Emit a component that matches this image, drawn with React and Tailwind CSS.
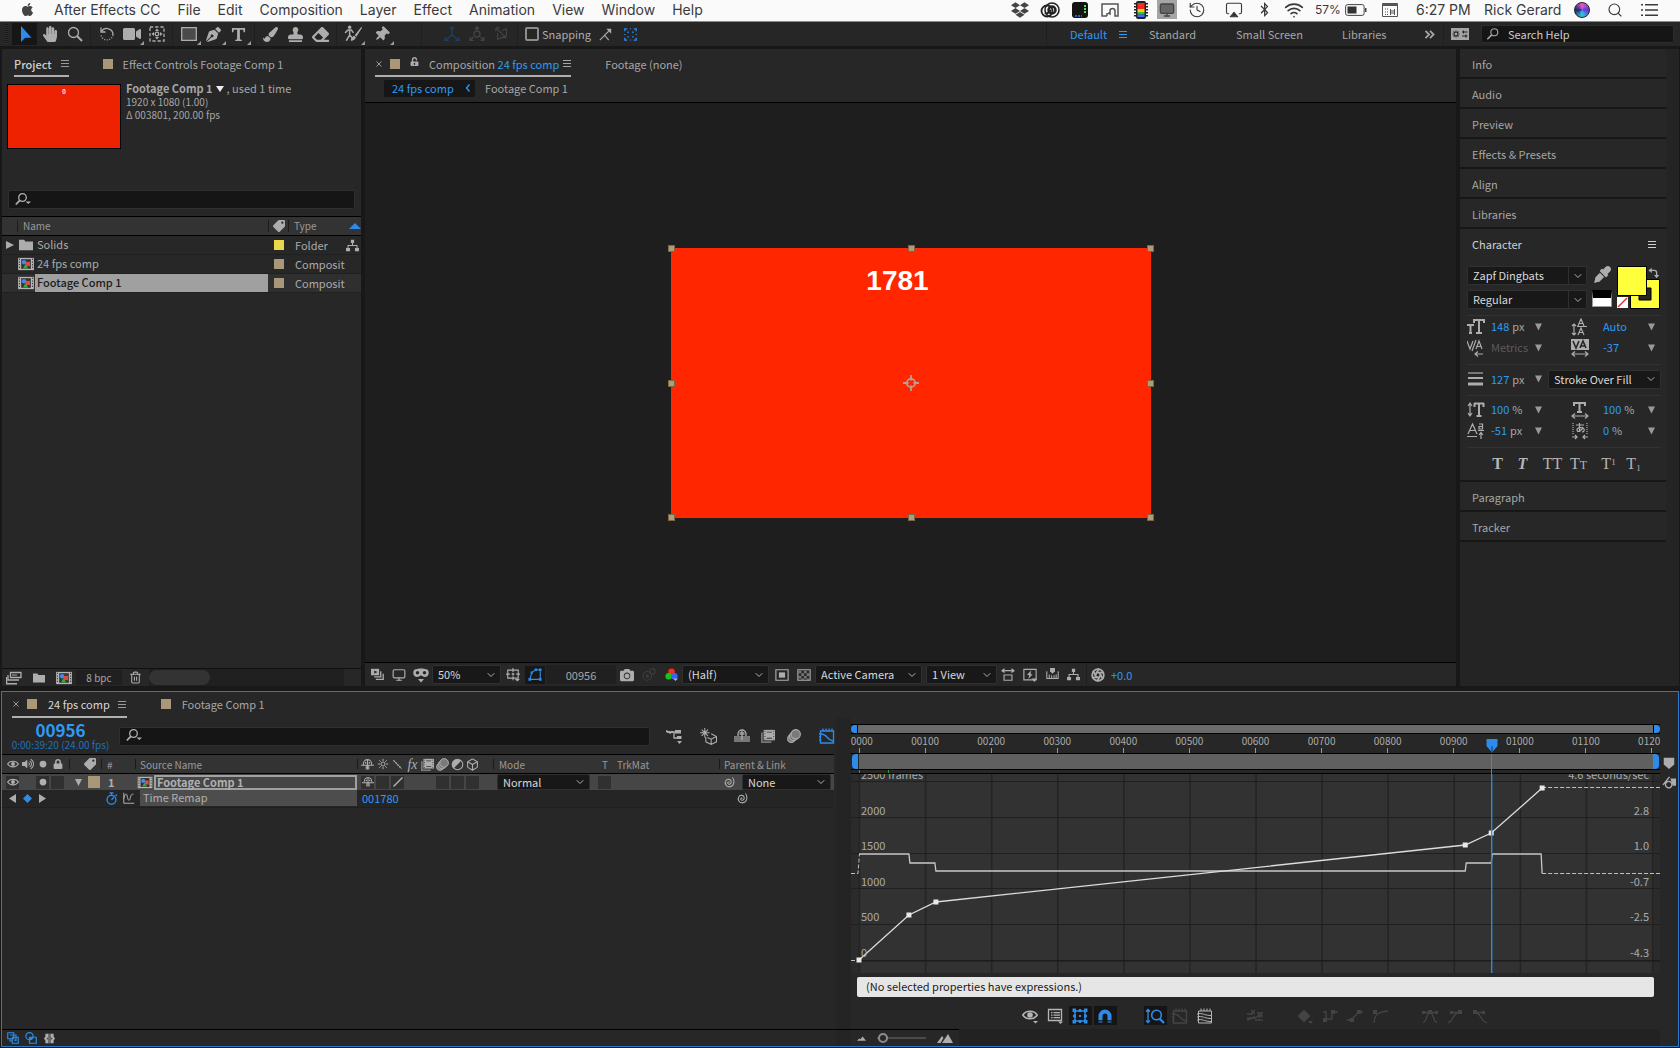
import React, { useState } from "react";
import {
  FaApple, FaDropbox, FaBluetoothB, FaHandPaper, FaStamp, FaEraser, FaPaintBrush, FaTag,
  FaLock, FaUnlockAlt, FaVolumeUp, FaCamera, FaThumbtack, FaPenNib, FaEyeDropper, FaVideo,
} from "react-icons/fa";
import { Wifi, History, Airplay, Search, ChevronDown, Box, Aperture, Monitor, Trash2 } from "lucide-react";

const line = { fill: "none", stroke: "currentColor", strokeWidth: 1.3 };

// 16 x 16 glyphs that the icon packs don't have
const glyphs = {
  arrow: <path d="M4 0v16l4.200-4.200H14.500z" />,
  lens: <g {...line}><circle cx="6.500" cy="6.500" r="5" /><path d="M10 10l5 5" strokeWidth="2" /></g>,
  search: <g {...line}><circle cx="9.500" cy="6" r="4" /><path d="M6.500 9L1.500 14" strokeWidth="1.800" /></g>,
  searchMenu: <g><g {...line}><circle cx="7.500" cy="5.500" r="3.800" /><path d="M4.800 8.300L.8 12.500" strokeWidth="1.700" /></g><path d="M10.500 9.500h5.500l-2.700 2.500z" /></g>,
  rotate: <g {...line}><path d="M2.500 5.500A6.200 6.200 0 0 1 14 9" /><path d="M14 9A6.200 6.200 0 0 1 2 9.500" strokeDasharray="1 1.500" /><path d="M2 1.500v4.500h4.500" /></g>,
  panBehind: <g><path {...line} strokeDasharray="3.200 2" d="M1 1h14v14H1z" /><path d="M8 2.500l2 2.500H6zM8 13.500l2-2.500H6zM2.500 8L5 6v4zM13.500 8L11 6v4z" /><circle cx="8" cy="8" r="1.800" {...line} /></g>,
  rect: <path d="M.7 1.700h14.600v12.600H.7z" fill="#4a4a4a" stroke="currentColor" strokeWidth="1.300" />,
  type: <path d="M1 1h14v4.500h-1.500L13 3H9.500v10l2 .8V15h-7v-1.200l2-.8V3H3l-.5 2.500H1z" />,
  roto: <g><circle cx="5" cy="2" r="1.500" /><path {...line} d="M1 7l2.500-2.500H6.500L8.500 7M5 5v4l-3 5M5 9l2 2v3" /><path d="M15.500 1.500L9.500 9l1.500 1.500 5-8zM9 9.500c-2 .5-1.500 3-3.500 4 2.500.5 5-.5 5-2.700z" /></g>,
  axis: <g {...line}><path d="M8 1v8M8 9l-6.500 5M8 9l6.500 5M6 3l2-2.300L10 3M1.200 11v3.300h3.300M14.800 11v3.300h-3.300" /></g>,
  axisWorld: <g {...line}><path d="M8 1v3M4.500 11L2 13.500M11.500 11l2.500 2.500M6 3l2-2.300L10 3M1.200 11v3.300h3.300M14.800 11v3.300h-3.300" /><circle cx="8" cy="8" r="3" /></g>,
  axisView: <g {...line}><path d="M2 2l11 11M3 7v7l10-4V2L8 4M1 1h4M1 1v4" /></g>,
  snapEdge: <g><path {...line} d="M1 15l6-6 5 6M6.500 9L12 4" /><path d="M9 1h6v6z" /></g>,
  snapBox: <g {...line} strokeWidth="1.600"><path d="M1 4V1h3M12 1h3v3M15 12v3h-3M4 15H1v-3M5 6V5h1M10 5h1v1M11 10v1h-1M6 11H5v-1M7.500 1h1M7.500 15h1M1 7.500v1M15 7.500v1" /></g>,
  workspace: <g><path d="M-1 2h18v12H-1z" /><path d="M4 4.500v7M.5 8h7M1.500 5.500l5 5M6.500 5.500l-5 5M10 6h5.500M10 10h5.500M11.500 4.500v3M14 8.500v3" stroke="#262626" strokeWidth="1.200" /><circle cx="4" cy="8" r="1.300" /></g>,
  swap: <g><path {...line} strokeWidth="1.800" d="M4 4.500h4.500a3 3 0 0 1 3 3V11" /><path d="M5 1v7L.5 4.500zM8 10.500h7L11.500 15z" /></g>,
  comp: <g><path fill="#b5b5b5" d="M-1 1h18v14H-1z" /><path fill="#2b2b2b" d="M0 2h1v1.500H0zM0 5h1v1.500H0zM0 8h1v1.500H0zM0 11h1v1.500H0zM15 2h1v1.500h-1zM15 5h1v1.500h-1zM15 8h1v1.500h-1zM15 11h1v1.500h-1z" /><path fill="#333" d="M2.500 2.500h11v11h-11z" /><circle cx="5.800" cy="6" r="2.500" fill="#3b8df0" /><path fill="#e04a3c" d="M8 5.500h4.500v5H8z" /><path fill="#2eae3a" d="M7.500 8l3 5h-6z" /></g>,
  folder: <path d="M0 2h6l1.200 2H16v10H0z" />,
  footage: <g><path {...line} d="M4.500 2.500H15v5H4.500zM2 5v5h11" /><path d="M0 7h1.300v6H11v1.500H0zM6 4.500h5v1H6z" /></g>,
  tree: <g><path d="M6 1h4v4H6zM0 11h5v4H0zM11 11h5v4h-5z" /><path {...line} d="M8 5v3M2.500 11V8h11v3" /></g>,
  layers: <g><path d="M0 1h10v8H0z" /><path d="M4 3l4 2-4 2z" fill="#272727" /><path {...line} strokeWidth="1.600" d="M12 4v7H4M15 7v7H6" /></g>,
  goggles: <g><path d="M1 3c4-2 10-2 14 0 1.500 3 .5 7-3 7-2 0-3-1.500-4-1.500S6 10 4 10C.5 10-.5 6 1 3zM5 12h6l-3 3.500z" /><circle cx="4.500" cy="5.800" r="1.700" fill="#272727" /><circle cx="11.500" cy="5.800" r="1.700" fill="#272727" /></g>,
  gridOpt: <g><path {...line} d="M2 2.500h12v9H2zM8 0v4.500M8 9.500V14M0 7h4.500M11.500 7H16M6.500 7h3M8 5.500v3" /><path d="M10 12.500h6l-3 3z" /></g>,
  mask: <g><path {...line} d="M2 13L4.500 5 9 2h5v11z" /><path d="M.5 11.500h3v3h-3zM12.500 11.500h3v3h-3zM12.500.5h3v3h-3zM7.500.5h3v3h-3zM3 4h2.500v2.500H3z" /></g>,
  snapshot: <g><circle cx="6" cy="9" r="5" {...line} /><circle cx="6" cy="9" r="2" /><circle cx="12" cy="4" r="3" {...line} /></g>,
  rgb: <g><circle cx="8" cy="4.500" r="4" fill="#ff2a12" /><circle cx="4.500" cy="10" r="4" fill="#19c219" /><circle cx="11.500" cy="10" r="4" fill="#3763ff" /><path d="M10 13h6l-3 3z" /></g>,
  roi: <g><path {...line} d="M1 2h14v12H1z" /><path d="M4.500 5h7v6h-7z" /></g>,
  checker: <g><path {...line} d="M1 2h14v12H1z" /><path opacity=".6" d="M2 3h3v3H2zM8 3h3v3H8zM5 6h3v3H5zM11 6h3v3h-3zM2 9h3v3H2zM8 9h3v3H8zM5 12h3v1.500H5zM11 12h3v1.500h-3z" /></g>,
  aspect: <g><path {...line} d="M3.500 8h9v6h-9zM2 3h12" /><path d="M0 3l4-3v6zM16 3l-4-3v6z" /></g>,
  fast: <g><path {...line} d="M1 1.500h14v12H1z" /><path d="M9.500 2.500L4.500 8h2.700L6 12.500 11 7H8.500z" /><path d="M9.500 12h6.500l-3 4z" /></g>,
  ruler: <g><path {...line} d="M1 4v9h14V4M4 8v5M7 9v4M10 9v4M12.500 8v5" /><path d="M5 0h6v4L8 7 5 4z" /></g>,
  shy: <g><path {...line} d="M3 9V7a5 5 0 0 1 10 0v2M0 9h16M8 2v12M6.500 9v5M9.500 9v5" /><path d="M5 5h1.500v2H5zM9.500 5H11v2H9.500z" /></g>,
  shyAll: <g><path {...line} d="M4 8V6a4 4 0 0 1 8 0v2M8 3v9" /><path d="M5.500 4h5v3h-5z" opacity=".7" /><path opacity=".6" d="M0 8h16v6H0z" /></g>,
  sun: <g {...line}><circle cx="8" cy="8" r="2.700" /><path d="M8 1v3M8 12v3M1 8h3M12 8h3M3 3l2 2M11 11l2 2M13 3l-2 2M5 11l-2 2" /></g>,
  quality: <path {...line} strokeWidth="2" strokeDasharray="3 1" d="M2 2l12 12" />,
  slash: <path {...line} strokeWidth="1.800" d="M2 14L14 2" />,
  film: <g><path opacity=".6" d="M0 4h2v10h10v2H0z" /><path d="M3 1h13v12H3z" /><path fill="#333" d="M6.500 3h6v1h-6zM6.500 10h6v1h-6zM4 2h1v1H4zM4 5h1v1H4zM4 8h1v1H4zM4 11h1v1H4zM14 2h1v1h-1zM14 5h1v1h-1zM14 8h1v1h-1zM14 11h1v1h-1z" /></g>,
  blur: <g fill="#7a7a7a" stroke="currentColor" strokeWidth="1.200"><circle cx="5" cy="11" r="4.300" /><circle cx="7.500" cy="8.500" r="4.800" /><circle cx="10" cy="6" r="5.300" /></g>,
  adjust: <g><circle cx="8" cy="8" r="6.500" {...line} /><path d="M12.600 3.400A6.500 6.500 0 1 0 3.400 12.600z" /></g>,
  eye: <g><path {...line} strokeWidth="1.500" d="M.8 8C4 3 12 3 15.200 8 12 13 4 13 .8 8z" /><circle cx="8" cy="8" r="2.600" /></g>,
  eyeMenu: <g><path {...line} strokeWidth="1.500" d="M.8 7C4 2 12 2 15.200 7 12 12 4 12 .8 7z" /><circle cx="8" cy="7" r="2.800" /><path d="M11 13h5l-2.500 2.500z" /></g>,
  dot: <circle cx="8" cy="8" r="4.500" />,
  spiral: <path {...line} strokeWidth="1.400" d="M8.500 8.500c-1-1.500-3 0-2 1.500 1.500 2 5 .5 4.500-2.500C10.500 4 6 3.500 4 6c-2.500 3.500 0 8.500 4.500 8.500 4.500-.5 6.500-4 6-8-.2-2-1-3.500-2-4.500" />,
  stopwatch: <g {...line} strokeWidth="1.600"><circle cx="8" cy="9.500" r="5.500" /><path d="M8 9.500l3-3M5.500 1h5M8 1v3M13 3l1.800 1.800" /></g>,
  graphToggle: <path {...line} d="M1 1v14h14M1 9c2-8 4-8 5-2s3 5 4 0 3-4 4-4" />,
  flow: <g><path d="M0 2l5 2v2L0 4zM5 3h2v2H5zM9 2h6v3.500H9zM11 8h4.500v3H11zM11 13h5l-2.500 3z" /><path {...line} d="M1 4h8M8 4v6h4" /></g>,
  draft: <g><path {...line} strokeWidth="1" d="M4.500 0v9M0 4.500h9M1.500 1.500l6 6M7.500 1.500l-6 6M10.500 5.500l5 2.500v5l-5 2.500-5-2.500V8.500M10.500 15.500v-5M15.500 8l-5 2.500L7 9" /></g>,
  graph: <g><path {...line} d="M1.500 3h13v12h-13zM4 .5V3M7 .5V3M10 .5V3M13 .5V3M0 6h1.500M0 9h1.500M0 12h1.500" /><path {...line} d="M2 6c7 0 5 6 12 7" /></g>,
  graphRef: <g><path {...line} strokeWidth="1" d="M1.500 3h13v12h-13zM4 .5V3M7 .5V3M10 .5V3M13 .5V3M0 6h1.500M0 9h1.500M0 12h1.500M2 5.500c5 0 6 2 12 2M2 8.500c5 0 6 2 12 2M2 11.500c5 0 6 2 12 2" /></g>,
  list: <g><path {...line} d="M1.500 1.500h13v11h-13z" /><path d="M4 4h1.500v1.300H4zM6.500 4H13v1.300H6.500zM4 6.500h1.500v1.300H4zM6.500 6.500H13v1.300H6.500zM4 9h1.500v1.300H4zM6.500 9H13v1.300H6.500zM11 13.500h5l-2.500 2.500z" /></g>,
  transform: <g><path {...line} strokeWidth="1.600" d="M3 3h10v10H3z" /><path d="M.5.5h3.500V4H.5zM12 .5h3.500V4H12zM.5 12h3.500v3.500H.5zM12 12h3.500v3.500H12zM6.700 1h2.600v3H6.700zM6.700 12h2.600v3H6.700zM1 6.700h3v2.600H1zM12 6.700h3v2.600h-3zM7 7h2v2H7z" /></g>,
  magnet: <g><path d="M1.500 8a6.500 6.500 0 0 1 13 0v4H10.500V8a2.500 2.500 0 0 0-5 0v4h-4z" /><path opacity=".5" d="M1.500 12.500h4V15h-4zM10.500 12.500h4V15h-4z" /></g>,
  fitZoom: <g><path {...line} d="M1 2v12M-1 3.500l2-2 2 2M-1 12.500l2 2 2-2" /><circle cx="9.500" cy="7" r="4.800" {...line} strokeWidth="1.600" /><path d="M12.500 10.500l4.500 4.500" stroke="currentColor" strokeWidth="2.200" /></g>,
  separate: <path {...line} d="M0 6h6M0 10h8l3-2h5M8 12h8M10 5h6M0 12c4 0 5-3 8-3M4 2l4 4M8 2L4 6M11 6l2 2M15 5l-3 5" />,
  diamond: <path d="M7 1.500l6.500 6.500L7 14.500.5 8zM11 13h5l-2.500 3z" />,
  hold: <g><path d="M1 10h4v4H1zM9 2h4v4H9z" /><path {...line} d="M1 4h3v7h6V5M12 4h4" /></g>,
  linear: <g><path d="M3 10h4v4H3zM10 2h4v4h-4z" /><path {...line} d="M0 12h4L12 4h4" /></g>,
  autoBez: <g><path d="M1 2h4v4H1z" /><path {...line} d="M2 15c0-8 4-11 14-12" /></g>,
  easy: <g><path d="M6 2h4v4H6zM0 3h3v3H0zM13 3h3v3h-3z" /><path {...line} d="M1 4.500h14M1 14.500c4 0 3-10 7-10s3 10 7 10" /></g>,
  easyIn: <g><path d="M11 2h4v4h-4zM3 3h3v3H3z" /><path {...line} d="M5 4.500h8M1 14.500c5 0 5-10 11-10" /></g>,
  easyOut: <g><path d="M1 2h4v4H1zM10 3h3v3h-3z" /><path {...line} d="M4 4.500h8M3 4.500c6 0 6 10 12 10" /></g>,
  shield: <path d="M1 1h14v9l-7 6-7-6z" />,
  keyIn: <g><path {...line} strokeWidth="1.700" d="M0 11L8 1M3 11a4 4 0 1 1 3 3.500M3 11a4 4 0 0 0 3 3.500" /><path d="M9 3h7v9h-4z" /></g>,
  hillSmall: <path d="M0 12l4-4 2 1.500 4-5L16 12z" />,
  hillBig: <path d="M0 13l5-7 1.500 2L3.500 13zM5 13l6-9 5 9z" />,
  switches: <g><path {...line} strokeWidth="1.500" d="M1 1h8v8H1zM4 4h8v8M4 9v3h4" /><path {...line} strokeWidth="1.500" d="M7 7h8v8H7z" /><path d="M10 10h2v2h-2z" /></g>,
  modes: <g><circle cx="6" cy="5.500" r="4.800" {...line} strokeWidth="1.600" /><path {...line} strokeWidth="1.600" d="M6 7h9v8H6z" /><path d="M6 7h5c0 3-2 4-5 3.500z" /></g>,
  inOut: <g><path opacity=".5" d="M5 1h6v14H5z" /><path d="M2 1h4v5L3.500 8 6 10v5H2v-4L0 8l2-3zM14 1h-4v5l2.500 2L10 10v5h4v-4l2-3-2-3z" /></g>,
  menuList: <g><path d="M4 2h13v1.600H4zM4 7.200h13v1.600H4zM4 12.400h13V14H4zM0 2h2v1.600H0zM0 7.200h2v1.600H0zM0 12.400h2V14H0z" /></g>,
};

const Icon = ({ name, className = "size-4" }) => (
  <svg viewBox="0 0 16 16" className={`${className} shrink-0 overflow-visible`} fill="currentColor" aria-hidden="true">
    {glyphs[name]}
  </svg>
);

const IconButton = ({ label, className = "w-[22px] h-5", children }) => (
  <button type="button" aria-label={label} className={`flex items-center justify-center shrink-0 ${className}`}>
    {children}
  </button>
);

const Burger = ({ className = "" }) => (
  <span className={`flex flex-col gap-[2px] w-2 shrink-0 ${className}`}>
    <i className="h-px bg-current" />
    <i className="h-px bg-current" />
    <i className="h-px bg-current" />
  </span>
);

const Swatch = ({ className = "bg-[#a89878]" }) => <span className={`size-[10px] shrink-0 ${className}`} />;

const Close = () => (
  <svg viewBox="0 0 6 6" className="size-[6px] ml-px mr-2 shrink-0" fill="none" stroke="#9a9a9a" aria-hidden="true"><path d="M.5.500l5 5M5.500.500l-5 5" /></svg>
);

const Dropdown = ({ label, value, split, className = "" }) => (
  <span className={`relative flex shrink-0 bg-[#181818] border border-[#303030] rounded-[2px] ${className}`}>
    <select aria-label={label} className="w-full h-full appearance-none bg-transparent pl-[5px] pr-4 text-[#d8d8d8] outline-none leading-[15px]">
      <option>{value}</option>
    </select>
    <span className={`absolute right-0 inset-y-0 w-[18px] flex items-center justify-center pointer-events-none ${split ? "border-l border-[#303030]" : ""}`}>
      <ChevronDown className="size-3 text-[#b0b0b0]" />
    </span>
  </span>
);

const menus = ["File", "Edit", "Composition", "Layer", "Effect", "Animation", "View", "Window", "Help"];

const MenuBar = () => (
  <header className="h-[22px] shrink-0 bg-[#fafafa] border-b border-[#8a8a8a] flex items-center justify-between pb-[2px] text-[#3a3a3a] text-[14px] leading-[18px] font-[Inter,sans-serif] overflow-hidden">
    <nav className="flex items-center gap-[17px] pl-5 whitespace-nowrap">
      <FaApple className="size-[15px] mr-[2px] text-[#444]" />
      <button type="button">After Effects CC</button>
      {menus.map((m) => <button type="button" key={m}>{m}</button>)}
    </nav>
    <div className="flex items-center pr-[22px] whitespace-nowrap">
      <span className="w-[30px] flex justify-center"><FaDropbox className="size-[18px] text-[#444]" /></span>
      <span className="w-[30px] flex justify-center">
        <svg viewBox="0 0 20 16" className="w-5 h-4" fill="none" stroke="#222" aria-hidden="true">
          <circle cx="7" cy="9" r="5.500" strokeWidth="1.800" /><circle cx="12" cy="8" r="7" strokeWidth="1.600" />
          <circle cx="12" cy="8" r="3.500" strokeWidth="2.500" /><path d="M5 11c3 2 4-1 6-3" strokeWidth="2" />
        </svg>
      </span>
      <span className="w-[30px] flex justify-center">
        <svg viewBox="0 0 16 16" className="size-4" aria-hidden="true">
          <rect width="16" height="16" rx="3" fill="#141414" /><path d="M13 3v9" stroke="#4fe34f" strokeWidth="2" strokeDasharray="2 1" /><path d="M3 14h7" stroke="#3a7bff" strokeWidth="1.500" strokeDasharray="2 1" />
        </svg>
      </span>
      <span className="w-[30px] flex justify-center">
        <svg viewBox="0 0 18 14" className="w-[18px] h-[14px]" fill="none" stroke="#555" strokeWidth="1.500" aria-hidden="true">
          <path d="M6 13H1V1h16v12h-3V8a2.500 2.500 0 0 0-5 0v3l-2-1M6 13v-3" />
        </svg>
      </span>
      <span className="w-[32px] flex justify-center">
        <svg viewBox="0 0 14 18" className="w-[14px] h-[18px]" aria-hidden="true">
          <path d="M1 2v15M13 2v15" stroke="#222" strokeWidth="2" strokeDasharray="1.500 1.500" /><rect x="2" width="10" height="18" rx="2" fill="#222" />
          <path fill="#ff2a1a" d="M3.500 2h7v6h-7z" /><path fill="#ffd21c" d="M3.500 8h7v3h-7z" /><path fill="#35c52b" d="M3.500 11h7v2.500h-7z" /><path fill="#3a6cff" d="M3.500 13.500h7V16h-7z" />
        </svg>
      </span>
      <span className="w-[20px] h-[19px] flex items-center justify-center bg-[#a5a5a5]"><Monitor className="size-4 text-[#444] fill-[#666]" /></span>
      <span className="w-[40px] flex justify-center"><History className="size-[18px]" strokeWidth={1.5} /></span>
      <span className="w-[34px] flex justify-center"><Airplay className="size-[18px] [&_path:last-child]:fill-[#333]" strokeWidth={1.5} /></span>
      <span className="w-[26px] flex justify-center"><FaBluetoothB className="size-[15px]" /></span>
      <span className="w-[34px] flex justify-center"><Wifi className="size-[20px]" strokeWidth={2} /></span>
      <span className="w-[30px] pl-1 text-[12px]">57%</span>
      <svg viewBox="0 0 22 12" className="w-[22px] h-3 ml-1" aria-hidden="true">
        <rect x=".6" y=".6" width="18.500" height="10.800" rx="2" fill="none" stroke="#444" /><path fill="#333" d="M2.500 2.500h9v7h-9z" /><path fill="#444" d="M20 4h1.500v4H20z" />
      </svg>
      <span className="w-[46px] flex justify-center">
        <svg viewBox="0 0 16 14" className="w-4 h-[14px]" fill="none" stroke="#555" aria-hidden="true">
          <path d="M.5.500h15v13H.5z" /><path d="M.5 2h15" strokeWidth="2" /><path d="M3 6h3M3 9h3M3 11.500h3" strokeDasharray="1 1" /><path d="M8.500 8h4v2h-4zM8.500 6v6M12.500 6v6" />
        </svg>
      </span>
      <span className="w-[71px] pl-[3px]">6:27 PM</span>
      <span className="w-[90px]">Rick Gerard</span>
      <span className="size-4 rounded-full bg-[conic-gradient(#e65ad0,#5a3ad0,#37c8e8,#1b2a6b,#e65ad0)] border border-[#222]" />
      <span className="w-[50px] flex justify-center"><Search className="size-4" strokeWidth={1.7} /></span>
      <Icon name="menuList" className="w-[18px] h-4" />
    </div>
  </header>
);

const Divider = () => <span className="w-[7px] h-6 shrink-0 flex justify-center"><i className="w-px h-full bg-[#1f1f1f]" /></span>;

const Tool = ({ label, active, more, children }) => (
  <button type="button" aria-label={label} className={`relative w-[25px] h-[22px] shrink-0 flex items-center justify-center ${active ? "bg-[#161616] text-[#2d8ceb]" : ""}`}>
    {children}
    {more && <svg viewBox="0 0 4 4" className="absolute right-0 bottom-0 size-1" fill="#9a9a9a" aria-hidden="true"><path d="M4 0v4H0z" /></svg>}
  </button>
);

const Toolbar = () => {
  const [snap, setSnap] = useState(false);
  return (
    <div className="h-6 shrink-0 bg-[#262626] flex items-center text-[#adadad] overflow-hidden">
      <span className="w-3 flex justify-center"><i className="w-[3px] h-5 bg-[repeating-linear-gradient(#161616_0_1px,#303030_1px_2px)]" /></span>
      <Tool label="Selection" active><Icon name="arrow" /></Tool>
      <Tool label="Hand"><FaHandPaper className="size-4" /></Tool>
      <Tool label="Zoom"><Icon name="lens" /></Tool>
      <Divider />
      <Tool label="Rotation"><Icon name="rotate" /></Tool>
      <Tool label="Camera" more><FaVideo className="size-[18px]" /></Tool>
      <Tool label="Pan Behind"><Icon name="panBehind" /></Tool>
      <Divider />
      <Tool label="Rectangle" more><Icon name="rect" /></Tool>
      <Tool label="Pen" more><FaPenNib className="size-[15px]" /></Tool>
      <Tool label="Type" more><Icon name="type" className="size-[15px]" /></Tool>
      <Divider />
      <Tool label="Brush"><FaPaintBrush className="size-[15px]" /></Tool>
      <Tool label="Clone Stamp"><FaStamp className="size-[15px]" /></Tool>
      <Tool label="Eraser"><FaEraser className="size-[17px]" /></Tool>
      <Divider />
      <Tool label="Roto Brush" more><Icon name="roto" className="size-[18px]" /></Tool>
      <span className="w-1" />
      <Tool label="Puppet Pin" more><FaThumbtack className="size-[15px] rotate-45" /></Tool>
      <span className="w-6" />
      <Divider />
      <span className="w-[14px]" />
      <span className="flex text-[#1d3f66]"><Tool label="Local Axis"><Icon name="axis" /></Tool></span>
      <span className="flex text-[#444]">
        <Tool label="World Axis"><Icon name="axisWorld" /></Tool>
        <Tool label="View Axis"><Icon name="axisView" className="size-[14px]" /></Tool>
      </span>
      <Divider />
      <label className="flex items-center gap-[3px] pl-1 leading-[16px]">
        <input type="checkbox" checked={snap} onChange={(e) => setSnap(e.target.checked)} className="size-[14px] appearance-none border-2 border-[#8c8c8c] rounded-[2px] checked:bg-[#2d8ceb]" />
        Snapping
      </label>
      <span className="w-[2px]" />
      <Tool label="Snap to edges"><Icon name="snapEdge" className="size-[13px]" /></Tool>
      <span className="flex text-[#2d8ceb]"><Tool label="Snap to features"><Icon name="snapBox" className="size-[13px]" /></Tool></span>
      <div className="ml-auto flex items-center h-full text-[#a6a6a6] leading-[16px] whitespace-nowrap">
        <Divider />
        <button type="button" className="flex items-center gap-3 pl-[20px] w-[99px] text-[#2d9bf5]">Default <Burger /></button>
        <button type="button" className="w-[87px] text-left">Standard</button>
        <button type="button" className="w-[106px] text-left">Small Screen</button>
        <button type="button" className="w-[82px] text-left">Libraries</button>
        <button type="button" aria-label="More workspaces" className="w-4">
          <svg viewBox="0 0 12 10" className="w-3 h-[9px]" {...line} strokeWidth="2" aria-hidden="true"><path d="M1 1l4 4-4 4M6 1l4 4-4 4" /></svg>
        </button>
        <Divider />
        <button type="button" aria-label="Workspace settings" className="w-[34px] pl-[5px]"><Icon name="workspace" className="w-4 h-4" /></button>
        <label className="flex items-center w-[193px] h-[18px] mr-[6px] bg-[#151515] border border-[#2c2c2c] rounded-[2px]">
          <Icon name="search" className="size-[14px] ml-1" />
          <input aria-label="Search Help" placeholder="Search Help" className="w-full bg-transparent pl-2 outline-none placeholder:text-[#cccccc]" />
        </label>
      </div>
    </div>
  );
};

const projectItems = [
  { name: "Solids", type: "Folder", icon: "folder", color: "bg-[#e8d84a]", folder: true },
  { name: "24 fps comp", type: "Composit", icon: "comp", color: "bg-[#a89878]" },
  { name: "Footage Comp 1", type: "Composit", icon: "comp", color: "bg-[#a89878]", selected: true },
];

const ProjectPanel = () => (
  <section className="w-[359px] ml-[2px] shrink-0 bg-[#272727] flex flex-col overflow-hidden">
    <div className="h-7 shrink-0 flex items-stretch text-[#a6a6a6] leading-[16px]">
      <button type="button" className="ml-3 pt-[3px] flex items-center gap-[9px] border-b-2 border-[#b0b0b0] text-[#d0d0d0] font-medium">
        Project <Burger className="text-[#9a9a9a]" />
      </button>
      <button type="button" className="ml-[34px] pt-px flex items-center gap-[10px]"><Swatch />Effect Controls Footage Comp 1</button>
    </div>
    <div className="flex pt-[5px] pl-[5px] gap-[5px] h-[113px] shrink-0">
      <div className="w-[114px] h-[65px] mt-[2px] bg-[#ee2200] border border-black text-white text-[6px] leading-[14px] text-center font-bold">0</div>
      <div className="leading-[13px] text-[10px] text-[#a6a6a6]">
        <p className="flex items-center text-[11px]">
          <b className="font-bold">Footage Comp 1</b>
          <svg viewBox="0 0 8 6" className="w-2 h-[6px] mx-[3px]" fill="#eee" aria-hidden="true"><path d="M0 0h8L4 6z" /></svg>, used 1 time
        </p>
        <p>1920 x 1080 (1.00)</p>
        <p>Δ 003801, 200.00 fps</p>
      </div>
    </div>
    <label className="mx-[6px] h-[19px] shrink-0 flex items-center bg-[#151515] border border-[#2f2f2f] rounded-[2px] text-[#b0b0b0]">
      <Icon name="searchMenu" className="size-4 ml-[6px]" />
      <input aria-label="Search project" className="w-full bg-transparent outline-none pl-2" />
    </label>
    <table className="w-full table-fixed mt-[7px] shrink-0 text-left leading-[17px] text-[#aaaaaa] border-collapse">
      <colgroup><col /><col className="w-[21px]" /><col className="w-[72px]" /></colgroup>
      <thead>
        <tr className="h-[19px] bg-[#333] border-y border-black text-[10px] text-[#999]">
          <th className="font-normal p-0"><span className="block ml-[15px] pl-[5px] border-l border-[#1c1c1c] h-3 leading-[12px]">Name</span></th>
          <th className="p-0"><span className="flex justify-center border-x border-[#1c1c1c] h-3"><FaTag className="size-3 -scale-x-100 text-[#adadad]" /></span></th>
          <th className="font-normal p-0"><span className="flex items-center justify-between pl-[5px] leading-[12px]">Type
            <svg viewBox="0 0 12 6" className="w-3 h-[6px]" fill="#2d8ceb" aria-hidden="true"><path d="M0 6l6-6 6 6z" /></svg></span></th>
        </tr>
      </thead>
      <tbody>
        {projectItems.map((item) => (
          <tr key={item.name} className={`h-[19px] border-b border-[#202020] ${item.selected ? "bg-[#2f2f2f]" : ""}`}>
            <td className="p-0">
              <div className="flex items-center h-[18px]">
                <span className="w-4 flex justify-center">
                  {item.folder && <svg viewBox="0 0 8 8" className="size-[8px]" fill="#adadad" aria-hidden="true"><path d="M0 0l8 4-8 4z" /></svg>}
                </span>
                <Icon name={item.icon} className="w-4 h-[14px] text-[#adadad]" />
                <span className={`flex-1 ml-px pl-[2px] h-full ${item.selected ? "bg-[#a0a0a0] text-[#1c1c1c] font-medium" : ""}`}>{item.name}</span>
              </div>
            </td>
            <td className="p-0"><span className="flex justify-center"><Swatch className={item.color} /></span></td>
            <td className="p-0">
              <div className="flex items-center justify-between pl-[6px] pr-[2px]">
                <span>{item.type}</span>
                {item.folder && <Icon name="tree" className="size-[13px] text-[#adadad]" />}
              </div>
            </td>
          </tr>
        ))}
      </tbody>
    </table>
    <div className="mt-auto h-[18px] shrink-0 border-t border-[#101010] flex items-center pl-px text-[#adadad]">
      <IconButton label="Interpret Footage"><Icon name="footage" /></IconButton>
      <IconButton label="New Folder" className="w-7 h-4"><Icon name="folder" className="w-[14px] h-3" /></IconButton>
      <IconButton label="New Composition"><Icon name="comp" className="w-4 h-[14px]" /></IconButton>
      <button type="button" className="w-[46px] ml-px h-[15px] bg-[#202020] text-[10px] leading-[15px] text-[#a6a6a6]">8 bpc</button>
      <IconButton label="Delete" className="w-[27px] h-4"><Trash2 className="size-[13px]" /></IconButton>
      <div className="flex-1 mr-[17px] h-full bg-[#202020] flex items-center"><i className="w-[61px] h-[15px] rounded-full bg-[#333]" /></div>
    </div>
  </section>
);

const handles = [
  "-left-[3px] -top-[3px]", "left-1/2 -ml-[3px] -top-[3px]", "-right-[3px] -top-[3px]",
  "-left-[3px] top-1/2 -mt-[3px]", "-right-[3px] top-1/2 -mt-[3px]",
  "-left-[3px] -bottom-[3px]", "left-1/2 -ml-[3px] -bottom-[3px]", "-right-[3px] -bottom-[3px]",
];

const CompPanel = () => (
  <section className="flex-1 min-w-0 mx-1 bg-[#272727] flex flex-col overflow-hidden">
    <div className="h-7 shrink-0 flex items-stretch text-[#a6a6a6] leading-[16px] whitespace-nowrap">
      <button type="button" className="ml-[10px] pt-[3px] flex items-center border-b-2 border-[#b0b0b0]">
        <Close />
        <Swatch />
        <FaUnlockAlt className="size-[9px] mx-[10px] mb-1 text-[#adadad]" />
        <span>Composition <span className="text-[#2d9bf5]">24 fps comp</span></span>
        <Burger className="ml-1" />
      </button>
      <button type="button" className="ml-[34px] pt-px">Footage (none)</button>
    </div>
    <div className="h-[26px] shrink-0 border-b border-black flex items-center text-[#a6a6a6] leading-[16px] pb-[3px]">
      <button type="button" className="ml-[19px] w-[91px] h-[17px] bg-[#161616] text-[#2d9bf5] flex items-center justify-between pl-2 pr-1 rounded-[2px]">
        24 fps comp
        <svg viewBox="0 0 6 8" className="w-[6px] h-2" {...line} aria-hidden="true"><path d="M4.500.500L1.500 4l3 3.500" /></svg>
      </button>
      <button type="button" className="ml-[10px]">Footage Comp 1</button>
    </div>
    <div className="flex-1 min-h-0 bg-[#1e1e1e] flex items-center justify-center">
      <div className="relative w-[480px] h-[270px] bg-[#ff2600]">
        <p className="pt-[17px] pr-[26px] text-center text-white font-bold text-[28px] leading-[32px] font-['Liberation_Sans',sans-serif]">1781</p>
        {handles.map((h) => <i key={h} className={`absolute size-[7px] bg-[#b09c78] border border-[#7a6844] ${h}`} />)}
        <svg viewBox="0 0 16 16" className="absolute size-4 left-1/2 top-1/2 -ml-2 -mt-2" fill="none" stroke="#b8a098" strokeWidth="1.800" aria-hidden="true">
          <circle cx="8" cy="8" r="4.200" /><path d="M8 0v5.500M8 10.500V16M0 8h5.500M10.500 8H16" />
        </svg>
      </div>
    </div>
    <div className="h-6 shrink-0 border-t border-black flex items-center text-[#adadad] leading-[16px]">
      <span className="w-px" />
      <IconButton label="Always Preview"><Icon name="layers" className="size-[13px]" /></IconButton>
      <IconButton label="Primary Viewer"><Monitor className="size-[14px]" /></IconButton>
      <IconButton label="VR View"><Icon name="goggles" /></IconButton>
      <Dropdown label="Magnification" value="50%" className="h-[19px] w-[69px] mr-px" />
      <IconButton label="Grid and guides"><Icon name="gridOpt" className="size-[14px]" /></IconButton>
      <IconButton label="Mask visibility" className="w-5 h-[18px] mx-px bg-[#171717] text-[#2d8ceb]"><Icon name="mask" className="size-[14px]" /></IconButton>
      <span className="w-[70px] h-[19px] bg-[#202020] text-center leading-[20px] text-[#a6a6a6]">00956</span>
      <IconButton label="Take Snapshot"><FaCamera className="size-[14px]" /></IconButton>
      <span className="text-[#3c3c3c]"><IconButton label="Show Snapshot"><Icon name="snapshot" className="size-[14px]" /></IconButton></span>
      <IconButton label="Show Channel"><Icon name="rgb" className="size-[13px]" /></IconButton>
      <Dropdown label="Resolution" value="(Half)" className="h-[19px] w-[87px] mr-[2px]" />
      <IconButton label="Region of Interest"><Icon name="roi" className="size-[14px]" /></IconButton>
      <IconButton label="Transparency Grid"><Icon name="checker" className="size-[14px]" /></IconButton>
      <Dropdown label="3D View" value="Active Camera" className="h-[19px] w-[107px] mr-1" />
      <Dropdown label="View Layout" value="1 View" className="h-[19px] w-[71px]" />
      <IconButton label="Pixel Aspect"><Icon name="aspect" className="size-[14px]" /></IconButton>
      <IconButton label="Fast Previews"><Icon name="fast" className="size-[14px]" /></IconButton>
      <IconButton label="Timeline"><Icon name="ruler" className="size-[13px]" /></IconButton>
      <IconButton label="Flowchart" className="w-5 h-5"><Icon name="tree" className="size-[13px]" /></IconButton>
      <Divider />
      <IconButton label="Reset Exposure" className="w-4 h-5"><Aperture className="size-[14px]" strokeWidth={3} /></IconButton>
      <span className="ml-[5px] text-[#2d9bf5]">+0.0</span>
    </div>
  </section>
);

const Tri = () => (
  <svg viewBox="0 0 8 8" className="w-[7px] h-2 ml-auto shrink-0" fill="#999" aria-hidden="true"><path d="M0 0h8L4 8z" /></svg>
);

const serif = "font-['Liberation_Serif',serif]";

// one scrubbable value of the Character panel
const Metric = ({ icon, value, unit, right }) => (
  <div className={`flex items-center h-[21px] ${right ? "w-[84px]" : "w-[75px]"}`}>
    <span className={`shrink-0 text-[#adadad] ${right ? "w-8" : "w-6"}`}>{icon}</span>
    <span className="flex gap-[3px] whitespace-nowrap text-[#a6a6a6]">{value && <span className="text-[#2d9bf5]">{value}</span>}{unit}</span>
    <Tri />
  </div>
);

const Mini = ({ children }) => (
  <svg viewBox="0 0 18 18" className="size-[18px]" fill="none" stroke="currentColor" strokeWidth="1.200" aria-hidden="true">{children}</svg>
);

const mini = {
  size: <Mini><path d="M7 2h10M12 2v13M9 15h6M7 1v4M17 1v4M0 7h7M3.500 7v8M2 15h3" strokeWidth="2" /></Mini>,
  leading: <Mini><path d="M3 6v11M1 8l2-2 2 2M1 15l2 2 2-2M7 8l3-7 3 7M8 5.500h4M7 17l3-7 3 7M8 14.500h4M6 8.500h10" /></Mini>,
  kerning: <Mini><path d="M0 2l3 8 3-8M5 12L9 1M9 10l3-8 3 8M10 7.500h4M8 15h8M11 12.500L8 15l3 2.500" /></Mini>,
  tracking: <Mini><path d="M0 0h18v11H0z" fill="currentColor" stroke="none" /><path d="M2 2l3 7 3-7M9 9l3-7 3 7M10 7h4" stroke="#272727" strokeWidth="1.600" /><path d="M1 15h16M4 12.500L1 15l3 2.500M14 12.500l3 2.500-3 2.500" /></Mini>,
  stroke: <Mini><path d="M1 3h15" /><path d="M1 8h15" strokeWidth="2" /><path d="M1 14h15" strokeWidth="3" /></Mini>,
  vScale: <Mini><path d="M3 2v13M1 5l2-3 2 3M1 12l2 3 2-3" /><path d="M7 2.500h10M12 2v13M9.500 15h5M7.500 2v4M16.500 2v4" strokeWidth="2" /></Mini>,
  hScale: <Mini><path d="M3 2h11M8.500 2v9M6 11h5M3 1v4M14 1v4" strokeWidth="2" /><path d="M1 15h16M4 12.500L1 15l3 2.500M14 12.500l3 2.500-3 2.500" /></Mini>,
  baseline: <Mini><path d="M1 12l4.500-10L10 12M2.500 8.500h6M0 14.500h10M12 2h3.500v5H12V4.500h3.500M11 8.500h6M14 17v-6M12 13l2-2.500 2 2.500" /></Mini>,
  tsume: <Mini><path d="M2 1v11M16 1v11" strokeDasharray="1 1" /><path d="M5 3h8M8.500 1v9M12 5c-1 4-6 6-6 3s6-3 7-1-1 3-2 3M1 15h5M4 13l2 2-2 2M17 15h-5M14 13l-2 2 2 2" /></Mini>,
};

const CharacterPanel = () => (
  <div className="border-b-2 border-[#171717]">
    <div className="h-[30px] flex items-center justify-between pl-3 pr-[10px] text-[#d0d0d0] leading-[16px]">Character <Burger /></div>
    <div className="pl-[7px] pr-[5px]">
      <div className="flex pt-[7px] pb-[5px]">
        <div className="flex flex-col gap-[5px] w-[122px]">
          <Dropdown split label="Font family" value="Zapf Dingbats" className="h-[19px]" />
          <Dropdown split label="Font style" value="Regular" className="h-[19px]" />
        </div>
        <div className="w-[30px] flex flex-col items-center gap-[7px]">
          <button type="button" aria-label="Eyedropper"><FaEyeDropper className="size-[17px] text-[#adadad]" /></button>
          <button type="button" aria-label="Black or white" className="w-5 h-[17px] bg-white border border-[#999] border-t-8 border-t-black" />
        </div>
        <svg viewBox="0 0 44 44" className="size-11 overflow-visible" aria-hidden="true">
          <path d="M13.500 13.500h29v29h-29z" fill="#ffff3c" stroke="#000" /><path d="M22 22h12v12H22z" fill="#272727" stroke="#000" />
          <path d="M.5.500h29v29H.5z" fill="#ffff3c" stroke="#000" /><path d="M0 31h11v11H0z" fill="#fff" /><path d="M1 41l9-9" stroke="#e03030" strokeWidth="1.500" />
          <g transform="translate(31 1) scale(.75)" fill="#adadad" color="#adadad">{glyphs.swap}</g>
        </svg>
      </div>
      <div className="border-t border-[#333] pb-[6px]">
        <div className="flex justify-between pr-[6px]">
          <Metric icon={mini.size} value="148" unit="px" />
          <Metric right icon={mini.leading} value="Auto" />
        </div>
        <div className="flex justify-between pr-[6px]">
          <Metric icon={mini.kerning} unit={<span className="text-[#5a5a5a]">Metrics</span>} />
          <Metric right icon={mini.tracking} value="-37" />
        </div>
      </div>
      <div className="border-t border-[#333] h-[31px] flex items-center justify-between pb-[2px]">
        <Metric icon={mini.stroke} value="127" unit="px" />
        <Dropdown label="Stroke order" value="Stroke Over Fill" className="h-[19px] w-[113px]" />
      </div>
      <div className="border-t border-[#333] pt-[3px] pb-[6px]">
        <div className="flex justify-between pr-[6px]">
          <Metric icon={mini.vScale} value="100" unit="%" />
          <Metric right icon={mini.hScale} value="100" unit="%" />
        </div>
        <div className="flex justify-between pr-[6px]">
          <Metric icon={mini.baseline} value="-51" unit="px" />
          <Metric right icon={mini.tsume} value="0" unit="%" />
        </div>
      </div>
      <div className={`border-t border-[#333] h-[33px] flex items-center pl-[18px] text-[16px] leading-[20px] text-[#b5b5b5] ${serif}`}>
        <button type="button" aria-label="Faux Bold" className="w-[25px] font-bold">T</button>
        <button type="button" aria-label="Faux Italic" className="w-[25px] italic font-bold">T</button>
        <span className="w-[4px]" />
        <button type="button" aria-label="All Caps" className="w-[27px]">TT</button>
        <button type="button" aria-label="Small Caps" className="w-[25px]">T<span className="text-[12px]">T</span></button>
        <span className="w-[5px]" />
        <button type="button" aria-label="Superscript" className="w-[25px]">T<sup className="text-[9px]">1</sup></button>
        <button type="button" aria-label="Subscript" className="w-[25px]">T<sub className="text-[9px]">1</sub></button>
      </div>
    </div>
  </div>
);

const PanelTitle = ({ children }) => (
  <button type="button" className="w-full h-[30px] pl-3 pt-px text-left text-[#a6a6a6] leading-[16px] border-b-2 border-[#171717]">{children}</button>
);

const SidePanels = () => (
  <aside className="w-[219px] shrink-0 bg-[#242424] mr-px">
    <div className="w-[206px] bg-[#272727]">
      {["Info", "Audio", "Preview", "Effects & Presets", "Align", "Libraries"].map((t) => <PanelTitle key={t}>{t}</PanelTitle>)}
      <CharacterPanel />
      <PanelTitle>Paragraph</PanelTitle>
      <PanelTitle>Tracker</PanelTitle>
    </div>
  </aside>
);

const head = "p-0 font-normal";
const headSep = "border-l border-[#1a1a1a] h-[10px] flex items-center";
const Cell = ({ children }) => <span className="w-[15px] h-[13px] flex items-center justify-center shrink-0">{children}</span>;
const Slot = ({ children }) => <span className="w-[13px] h-[13px] mx-px bg-[#303030] flex items-center justify-center shrink-0">{children}</span>;

const LayerTable = () => (
  <table className="w-[832px] table-fixed border-collapse text-left text-[#b0b0b0] leading-[15px]">
    <colgroup>
      <col className="w-[67px]" /><col className="w-[32px]" /><col className="w-[34px]" /><col className="w-[222px]" />
      <col className="w-[136px]" /><col className="w-[104px]" /><col className="w-[20px]" /><col className="w-[102px]" /><col />
    </colgroup>
    <thead>
      <tr className="h-[19px] bg-[#333] border-y border-black text-[10px] text-[#999]">
        <th className={head}>
          <span className="flex items-center pl-[3px] text-[#adadad]">
            <Cell><Icon name="eye" className="size-3" /></Cell>
            <Cell><FaVolumeUp className="size-3" /></Cell>
            <Cell><Icon name="dot" className="size-3" /></Cell>
            <Cell><FaLock className="size-[10px]" /></Cell>
          </span>
        </th>
        <th className={head}><span className={`${headSep} justify-center pl-2 text-[#adadad]`}><FaTag className="size-[12px] -scale-x-100" /></span></th>
        <th className={head}><span className={`${headSep} pl-[5px]`}>#</span></th>
        <th className={head}><span className={`${headSep} pl-1`}>Source Name</span></th>
        <th className={head}>
          <span className={`${headSep} pl-[2px] text-[#adadad]`}>
            <Cell><Icon name="shy" className="size-[13px]" /></Cell>
            <Cell><Icon name="sun" className="size-3" /></Cell>
            <Cell><Icon name="quality" className="size-[11px]" /></Cell>
            <Cell><i className={`text-[14px] ${serif}`}>fx</i></Cell>
            <Cell><Icon name="film" className="size-[13px]" /></Cell>
            <Cell><Icon name="blur" className="size-[13px]" /></Cell>
            <Cell><Icon name="adjust" className="size-[13px]" /></Cell>
            <Cell><Box className="size-[13px]" /></Cell>
          </span>
        </th>
        <th className={head}><span className={`${headSep} pl-[5px]`}>Mode</span></th>
        <th className={head}><span className="pl-[5px]">T</span></th>
        <th className={head}>TrkMat</th>
        <th className={head}><span className={`${headSep} pl-1`}>Parent &amp; Link</span></th>
      </tr>
    </thead>
    <tbody>
      <tr className="h-4 bg-[#464646]">
        <td className="p-0">
          <span className="flex pl-[3px]"><Slot><Icon name="eye" className="size-3" /></Slot><Cell /><Slot><Icon name="dot" className="size-3" /></Slot><Slot /></span>
        </td>
        <td className="p-0">
          <span className="flex items-center gap-[6px] pl-[6px]">
            <svg viewBox="0 0 8 8" className="size-[7px]" fill="#adadad" aria-hidden="true"><path d="M0 0h8L4 8z" /></svg>
            <span className="size-3 bg-[#a89878]" />
          </span>
        </td>
        <td className="p-0 pl-[7px] font-bold">1</td>
        <td className="p-0">
          <span className="flex items-center pl-[2px]">
            <Icon name="comp" className="w-4 h-[13px]" />
            <span className="flex-1 ml-px h-[15px] leading-[11px] border-2 border-[#a0a0a0] pl-px font-bold">Footage Comp 1</span>
          </span>
        </td>
        <td className="p-0">
          <span className="flex pl-[3px]">
            <Slot><Icon name="shy" className="size-3" /></Slot><Slot /><Slot><Icon name="slash" className="size-3" /></Slot>
            <Cell /><Cell /><Slot /><Slot /><Slot />
          </span>
        </td>
        <td className="p-0 pl-1"><span className="flex h-4 w-[93px]"><Dropdown label="Blending mode" value="Normal" className="h-4 w-full" /></span></td>
        <td className="p-0"><Slot /></td>
        <td className="p-0" />
        <td className="p-0">
          <span className="flex items-center justify-between pl-[4px] pr-[3px]">
            <Icon name="spiral" className="size-3" />
            <Dropdown label="Parent" value="None" className="h-4 w-[89px]" />
          </span>
        </td>
      </tr>
      <tr className="h-[17px] border-b border-[#1f1f1f] bg-[#252525]">
        <td className="p-0">
          <span className="flex pl-[3px]">
            <Cell><svg viewBox="0 0 8 8" className="w-[7px] h-[9px]" preserveAspectRatio="none" fill="#adadad" aria-hidden="true"><path d="M8 0L0 4l8 4z" /></svg></Cell>
            <Cell><svg viewBox="0 0 8 8" className="size-[9px]" fill="#2d8ceb" aria-hidden="true"><path d="M4 0l4 4-4 4-4-4z" /></svg></Cell>
            <Cell><svg viewBox="0 0 8 8" className="w-[7px] h-[9px]" preserveAspectRatio="none" fill="#adadad" aria-hidden="true"><path d="M0 0l8 4-8 4z" /></svg></Cell>
          </span>
        </td>
        <td className="p-0" />
        <td className="p-0"><span className="flex items-center gap-[5px] pl-1"><Icon name="stopwatch" className="size-[13px] text-[#2d8ceb]" /><Icon name="graphToggle" className="size-3" /></span></td>
        <td className="p-0"><span className="block ml-[5px] pl-[3px] h-4 bg-[#4d4d4d]">Time Remap</span></td>
        <td className="p-0 pl-[5px] text-[#2d9bf5]">001780</td>
        <td className="p-0" colSpan={3} />
        <td className="p-0"><span className="block pl-[17px]"><Icon name="spiral" className="size-3" /></span></td>
      </tr>
    </tbody>
  </table>
);

const ticks = ["00000", "00100", "00200", "00300", "00400", "00500", "00600", "00700", "00800", "00900", "01000", "01100", "01200"];
const leftAxis = ["2500 frames", "2000", "1500", "1000", "500", "0"];
const rightAxis = ["4.6 seconds/sec", "2.8", "1.0", "-0.7", "-2.5", "-4.3"];
const gridX = ticks.map((_, i) => 8.5 + i * 66.17);
const gridY = [7.5, 43.5, 79.5, 114.5, 150.5, 186.5];
const keys = [[8, 186], [58, 141], [85, 128], [615, 71], [641, 59], [692, 14]];
const keyPoints = keys.map((k) => k.join(",")).join(" ");

const ValueGraph = () => (
  <div className="relative h-[199px] shrink-0 overflow-hidden bg-[#323232]">
    <svg viewBox="0 0 810 199" preserveAspectRatio="none" className="w-full h-[199px]" fill="none" role="img" aria-label="Time Remap value graph">
      <path d="M0 0h8v199H0zM803 0h7v199h-7z" fill="#2b2b2b" />
      {gridX.map((x) => <path key={x} d={`M${x} 0V199`} stroke="#242424" strokeWidth="1.500" />)}
      {gridY.map((y) => <path key={y} d={`M0 ${y}H810`} stroke="#1f1f1f" />)}
      <path d="M8 187H810" stroke="#1a1a1a" />
      <path d="M0 99.500h7L8.500 80M692 99.500h118M692 13.500h118M0 186.500h7" stroke="#c0c0c0" strokeDasharray="4 2" />
      <path d="M8 80h50l1 9h25l1 8h530l1-8h25l1-9h49l1 19.500" stroke="#c9c9c9" strokeWidth="1.300" />
      <polyline points={keyPoints} stroke="#dcdcdc" strokeWidth="1.300" />
      {keys.map(([x, y]) => <rect key={x} x={x - 2.5} y={y - 2.5} width="5" height="5" fill="#e8e8e8" />)}
      <path d="M641.500 0V199" stroke="#2d8ceb" strokeWidth="1.300" />
    </svg>
    <div className="absolute inset-x-0 -top-2 bottom-[13px] flex justify-between pl-[10px] pr-[11px] leading-[16px] text-[#aaaaaa] pointer-events-none">
      <div className="flex flex-col justify-between">{leftAxis.map((t) => <span key={t}>{t}</span>)}</div>
      <div className="flex flex-col justify-between text-right">{rightAxis.map((t) => <span key={t}>{t}</span>)}</div>
    </div>
  </div>
);

const GraphButton = ({ name, label, on, off }) => (
  <button type="button" aria-label={label} className={`w-[23px] mx-px h-[19px] flex items-center justify-center ${on ? "bg-[#151515] text-[#2d8ceb]" : off ? "text-[#444]" : "text-[#b5b5b5]"}`}>
    <Icon name={name} />
  </button>
);

const GraphEditor = () => (
  <div className="flex-1 min-w-0 flex flex-col pt-[6px]">
    <div className="h-[10px] shrink-0 border-y border-black flex">
      <i className="w-[7px] bg-[#2d8ceb] rounded-l-full border-r border-black" />
      <i className="flex-1 bg-[#6a6a6a]" />
      <i className="w-[7px] bg-[#2d8ceb] rounded-r-full border-l border-black" />
    </div>
    <div className="relative h-[19px] shrink-0 overflow-hidden">
      <div className="-mx-[25px] flex text-[10px] text-[#aaaaaa] leading-[13px]">
        {ticks.map((t) => (
          <span key={t} className="flex-1 flex flex-col items-center">{t}<i className="w-px h-[5px] mt-px bg-[#9a9a9a]" /></span>
        ))}
      </div>
      {/* current time indicator sits on the ruler */}
      <svg viewBox="0 0 12 14" className="absolute top-[5px] w-3 h-[14px] -ml-[6px]" style={{ left: `${(641.5 / 810) * 100}%` }} aria-hidden="true">
        <path d="M.5 0h11v7L6 13.500.5 7z" fill="#2d8ceb" /><path d="M6 7v7" stroke="#173a63" />
      </svg>
    </div>
    <div className="relative h-[17px] shrink-0 border-y border-black flex">
      <i className="w-[6px] bg-[#2d8ceb] rounded-l-[4px] ml-px" />
      <i className="flex-1 bg-[#606060] ml-px" />
      <i className="w-[6px] bg-[#2d8ceb] rounded-r-[4px] mr-px" />
      <i className="absolute top-0 h-[20px] w-px bg-[#2d8ceb]" style={{ left: `${(641 / 810) * 100}%` }} />
    </div>
    <div className="h-[4px] shrink-0 border-b border-black flex justify-start"><i className="ml-2 w-px bg-[#1fae1f]" /><i className="ml-7 w-px bg-[#1fae1f]" /></div>
    <ValueGraph />
    <input aria-label="Expression" readOnly value="(No selected properties have expressions.)" className="mt-1 mx-[6px] h-5 shrink-0 bg-[#e6e6e6] rounded-[2px] px-[9px] pb-[3px] text-[#1c1c1c] outline-none" />
    <div className="h-[32px] pt-[5px] pr-px shrink-0 flex items-center justify-center gap-[25px]">
      <div className="flex">
        <GraphButton name="eyeMenu" label="Show properties" />
        <GraphButton name="list" label="Graph type" />
        <GraphButton name="transform" label="Show transform box" on />
        <GraphButton name="magnet" label="Snap" on />
      </div>
      <div className="flex">
        <GraphButton name="fitZoom" label="Auto-zoom height" on />
        <GraphButton name="graph" label="Fit selection" off />
        <GraphButton name="graphRef" label="Fit all" />
      </div>
      <GraphButton name="separate" label="Separate dimensions" off />
      <div className="flex">
        <GraphButton name="diamond" label="Edit keyframes" off />
        <GraphButton name="hold" label="Hold" off />
        <GraphButton name="linear" label="Linear" off />
        <GraphButton name="autoBez" label="Auto bezier" off />
      </div>
      <div className="flex">
        <GraphButton name="easy" label="Easy ease" off />
        <GraphButton name="easyIn" label="Easy ease in" off />
        <GraphButton name="easyOut" label="Easy ease out" off />
      </div>
    </div>
    <div className="h-[17px] shrink-0 flex bg-[#222]">
      <div className="w-[108px] bg-[#272727] border-t border-black flex items-center text-[#adadad] pl-[6px] gap-[11px]">
        <Icon name="hillSmall" className="size-[9px]" />
        <input
          type="range" aria-label="Timeline zoom" defaultValue={2}
          className="w-[49px] h-[2px] appearance-none bg-[#4a4a4a] [&::-webkit-slider-thumb]:appearance-none [&::-webkit-slider-thumb]:size-[10px] [&::-webkit-slider-thumb]:rounded-full [&::-webkit-slider-thumb]:border-2 [&::-webkit-slider-thumb]:border-[#8c8c8c] [&::-webkit-slider-thumb]:bg-[#272727]"
        />
        <Icon name="hillBig" className="size-4" />
      </div>
    </div>
  </div>
);

const Timeline = () => (
  <section className="h-[356px] shrink-0 mt-[5px] mx-px mb-px border border-[#2a78cc] bg-[#272727] flex flex-col">
    <div className="h-[26px] shrink-0 flex items-stretch text-[#a6a6a6] leading-[24px]">
      <button type="button" className="ml-[10px] flex items-center border-b-2 border-[#b0b0b0] text-[#d8d8d8] whitespace-nowrap">
        <Close />
        <Swatch />
        <span className="pl-[11px] pr-2">24 fps comp</span>
        <Burger className="text-[#9a9a9a] mr-px" />
      </button>
      <button type="button" className="ml-[34px] pb-[2px] flex items-center gap-[11px]"><Swatch />Footage Comp 1</button>
    </div>
    <div className="flex-1 min-h-0 flex">
      <div className="w-[834px] shrink-0 flex flex-col">
        <div className="h-9 shrink-0 flex items-center">
          <div className="w-[117px] shrink-0 text-center">
            <p className="text-[17px] leading-[17px] font-bold text-[#2d9bf5]">00956</p>
            <p className="text-[10px] leading-[13px] text-[#2070b8]">0:00:39:20 (24.00 fps)</p>
          </div>
          <label className="w-[531px] h-[19px] shrink-0 flex items-center bg-[#151515] border border-[#2f2f2f] rounded-[2px] text-[#b0b0b0]">
            <Icon name="searchMenu" className="size-4 ml-[6px]" />
            <input aria-label="Search layers" className="w-full bg-transparent outline-none pl-2" />
          </label>
          <div className="ml-[13px] shrink-0 flex items-center text-[#adadad]">
            <IconButton label="Mini-flowchart"><Icon name="flow" /></IconButton>
            <IconButton label="Draft 3D" className="ml-3 w-[22px] h-5"><Icon name="draft" className="size-[17px]" /></IconButton>
            <IconButton label="Hide shy layers" className="ml-3 w-[22px] h-5"><Icon name="shyAll" /></IconButton>
            <IconButton label="Frame blending" className="ml-1 w-[22px] h-5"><Icon name="film" className="size-[14px]" /></IconButton>
            <IconButton label="Motion blur" className="ml-1 w-[22px] h-5"><Icon name="blur" className="size-[14px]" /></IconButton>
            <IconButton label="Graph Editor" className="ml-[14px] w-4 h-5 text-[#2d8ceb]"><Icon name="graph" className="size-4" /></IconButton>
          </div>
        </div>
        <LayerTable />
      </div>
      <div className="w-[15px] shrink-0 bg-[#242424]" />
      <GraphEditor />
      <div className="w-[18px] shrink-0 flex flex-col items-center gap-[6px] pt-[38px] text-[#adadad]">
        <Icon name="shield" className="w-3 h-[14px]" />
        <Icon name="keyIn" className="size-[13px]" />
      </div>
    </div>
    <div className="h-[17px] -mt-[17px] w-[849px] shrink-0 border-t border-black flex items-center pl-[2px] text-[#2d8ceb]">
      <IconButton label="Layer switches" className="w-[18px] h-4"><Icon name="switches" className="size-3" /></IconButton>
      <IconButton label="Transfer controls" className="w-[18px] h-4"><Icon name="modes" className="size-3" /></IconButton>
      <IconButton label="In and out" className="w-[18px] h-4 text-[#adadad]"><Icon name="inOut" className="size-[11px]" /></IconButton>
    </div>
  </section>
);

const App = () => (
  <div className="min-h-screen flex flex-col bg-[#181818] text-[11px] font-['Noto_Sans_CJK_SC','Noto_Sans',sans-serif] select-none">
    <MenuBar />
    <Toolbar />
    <main className="flex-1 min-h-0 flex mt-[3px]">
      <ProjectPanel />
      <CompPanel />
      <SidePanels />
    </main>
    <Timeline />
  </div>
);

export default App;
